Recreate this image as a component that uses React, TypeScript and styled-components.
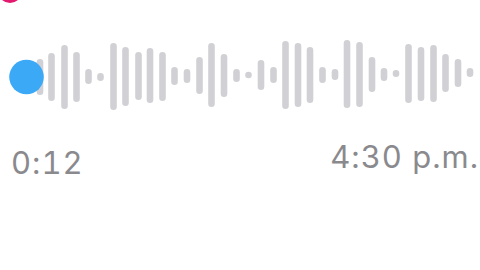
import React from "react";
import styled, { createGlobalStyle } from "styled-components";

const Global = createGlobalStyle`
  html, body { margin: 0; padding: 0; background: #ffffff; }
  body { font-family: Inter, "Noto Sans", sans-serif; }
`;

const Screen = styled.div`
  width: 480px;
  height: 270px;
  overflow: hidden;
  background: #ffffff;
  display: flex;
  flex-direction: column;
`;

const Avatar = styled.div`
  width: 24px;
  height: 24px;
  border-radius: 50%;
  background: #e3196f;
  margin: -21px 0 0 -2px;
  flex: none;
`;

const Wave = styled.svg`
  display: block;
  width: 480px;
  height: 138px;
  flex: none;
`;

const Meta = styled.div`
  display: flex;
  justify-content: space-between;
  align-items: flex-start;
  padding-left: 11px;
  padding-right: 1px;
`;

const Stamp = styled.span<{ $offset?: number }>`
  font-family: Inter, "Noto Sans", sans-serif;
  font-size: 31px;
  line-height: 1;
  color: #8a8a8e;
  font-feature-settings: "tnum" 1;
  font-variant-numeric: tabular-nums;
  letter-spacing: 1px;
  padding-top: ${(p) => p.$offset ?? 0}px;
  white-space: nowrap;
`;

const bars: [number, number, number][] = [
  [40, 59, 95],
  [51.5, 53, 101],
  [64.5, 45, 109],
  [76.5, 52, 102],
  [88.5, 69, 84],
  [100.5, 73, 81],
  [113.5, 43, 110],
  [125.5, 47, 106],
  [138.5, 52, 100],
  [150, 48, 103],
  [162.5, 52, 101],
  [174.5, 67, 85],
  [187, 69, 83],
  [199.5, 57, 94],
  [211.5, 43, 107],
  [224, 54, 97],
  [236.5, 69, 82],
  [248.5, 72, 78],
  [261, 60, 90],
  [273.5, 67, 83],
  [285.5, 41, 109],
  [298, 43, 107],
  [310, 47, 103],
  [322.5, 67, 83],
  [335, 69, 80],
  [347, 40, 108],
  [359.5, 42, 107],
  [372, 57, 92],
  [384, 68, 81],
  [396, 70, 77],
  [408.5, 44, 103],
  [421, 47, 101],
  [433.5, 45, 102],
  [445.5, 54, 92],
  [458, 59, 87],
  [470, 68, 77],
];

const W = 6.6;

export default function App() {
  return (
    <>
      <Global />
      <Screen>
        <Avatar />
        <Wave viewBox="0 3 480 138">
          {bars.map(([x, y1, y2], i) => {
            const h = Math.max(y2 - y1, W);
            const cy = (y1 + y2) / 2;
            return (
              <rect
                key={i}
                x={x - W / 2}
                y={cy - h / 2}
                width={W}
                height={h}
                rx={W / 2}
                fill="#d1d1d5"
              />
            );
          })}
          <circle cx={26.5} cy={77} r={17.3} fill="#3ba9f6" />
        </Wave>
        <Meta>
          <Stamp $offset={6}>0:12</Stamp>
          <Stamp>4:30 p.m.</Stamp>
        </Meta>
      </Screen>
    </>
  );
}
